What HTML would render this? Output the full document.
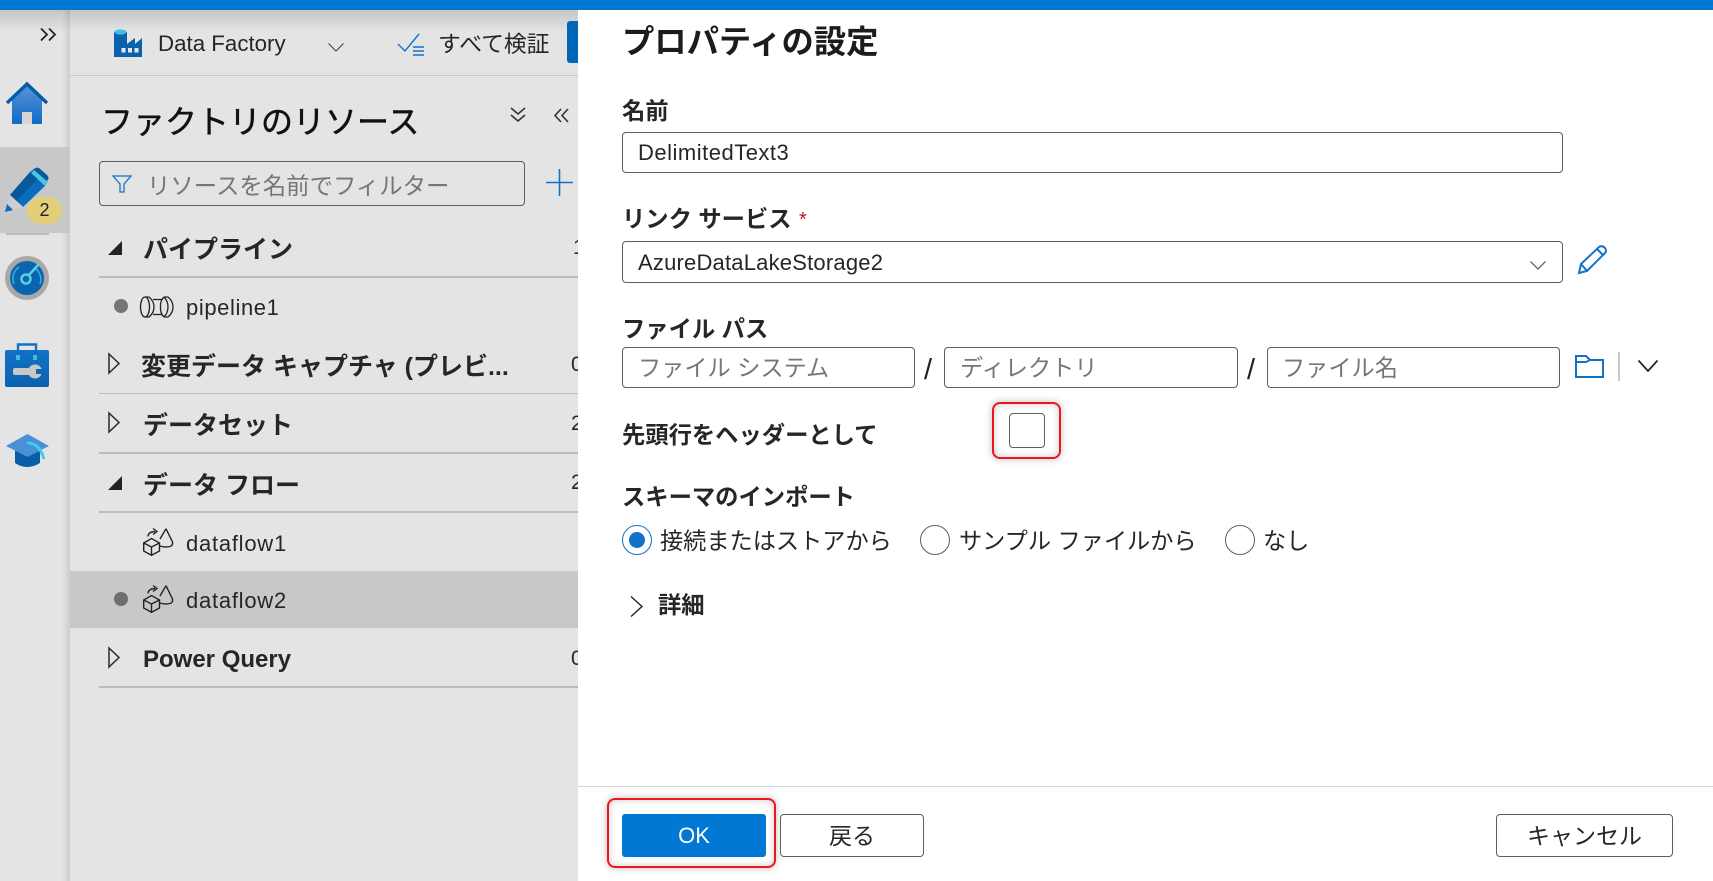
<!DOCTYPE html>
<html lang="ja"><head><meta charset="utf-8"><title>プロパティの設定</title>
<style>
html,body{margin:0;padding:0;width:1713px;height:881px;overflow:hidden;background:#e4e4e4}
body{position:relative;font-family:"Liberation Sans","Noto Sans CJK JP",sans-serif;color:#262626}
.a{position:absolute}
.t{position:absolute;white-space:nowrap;line-height:30px;height:30px}
.j{font-size:23.2px}
.b{font-weight:700}
.h{font-weight:700;font-size:25px}
.line{position:absolute;left:99px;width:479px;background:#bcbcbc}
.box{position:absolute;box-sizing:border-box;border:1px solid #605e5c;border-radius:4px;background:#fff}
.ph{color:#767676}
.radio{position:absolute;box-sizing:border-box;width:30px;height:30px;border:1px solid #605e5c;border-radius:50%;background:#fff}
.red{position:absolute;box-sizing:border-box;border:2px solid #f01420;border-radius:8px;box-shadow:0 0 8px rgba(0,0,0,.25),inset 0 0 8px rgba(0,0,0,.2);background:#fff}
svg{position:absolute;overflow:visible}
</style></head><body>

<!-- left dimmed -->
<div class="a" style="left:0;top:0;width:578px;height:881px;background:#e4e4e4"></div>
<div class="a" style="left:0;top:10px;width:578px;height:22px;background:linear-gradient(#c6c6c6,#e4e4e4)"></div>
<div class="a" style="left:62px;top:10px;width:8px;height:871px;background:linear-gradient(90deg,rgba(0,0,0,0),rgba(0,0,0,.1))"></div>
<div class="a" style="left:0;top:147px;width:70px;height:86px;background:#c8c8c8"></div>
<div class="a" style="left:6px;top:233px;width:43px;height:2px;background:#bcbcbc"></div>
<div class="a" style="left:70px;top:75px;width:508px;height:1px;background:#c8c8c8"></div>
<div class="a" style="left:70px;top:571px;width:508px;height:57px;background:#c8c8c8"></div>

<!-- top bar -->
<div class="a" style="left:0;top:0;width:1713px;height:10px;background:#0078d4;overflow:hidden">
<span class="t" style="left:1520px;top:-24px;color:#fff;font-size:22px">機能</span></div>

<!-- rail icons -->
<svg style="left:40px;top:28px" width="16" height="13" viewBox="0 0 16 13" fill="none" stroke="#222" stroke-width="1.8"><path d="M1 0.5L7 6.5L1 12.5M9 0.5L15 6.5L9 12.5"/></svg>
<svg style="left:0;top:80px" width="54" height="50" viewBox="0 0 54 50"><defs><linearGradient id="h" x1="0" y1="0" x2="0" y2="1"><stop offset="0" stop-color="#5a92d6"/><stop offset="1" stop-color="#0f6cc6"/></linearGradient></defs>
<path d="M12 19L27 5L42 19V44H12Z" fill="url(#h)"/><path d="M7 23L27 4L47 23" fill="none" stroke="#035ea8" stroke-width="3.4"/><rect x="22" y="32" width="10" height="12" fill="#d6d6d6"/></svg>
<svg style="left:4px;top:168px" width="46" height="50" viewBox="0 0 46 50"><path d="M6 27L26 4L42 17L19 39Z" fill="#0a6cc0"/><path d="M6 27L26 4L34 10.5L12.5 33Z" fill="#08589c"/><path d="M26 4L30 1Q32 -1 35 0L43 7Q46 10 43 13L41 17Z" fill="#045c9e"/><path d="M27 5L30 2L44 14L41 18Z" fill="#4fc3dc"/><path d="M6 27L19 39L1 44Z" fill="#cfcfcf"/><path d="M1 44L3 36L9 42Z" fill="#0a6cc0"/></svg>
<div class="a" style="left:27px;top:197px;width:35px;height:27px;border-radius:14px;background:#e3cf7a;text-align:center;font-size:18px;line-height:27px;color:#222">2</div>
<svg style="left:5px;top:256px" width="44" height="44" viewBox="0 0 44 44"><circle cx="22" cy="22" r="22" fill="#a8a8a8"/><circle cx="22" cy="22" r="17" fill="#0a64ae"/><path d="M9 28A14 14 0 0 1 14 11M30 12A14 14 0 0 1 35 28" fill="none" stroke="#32b4d8" stroke-width="1.5"/><circle cx="21" cy="23" r="4.5" fill="none" stroke="#5ccde6" stroke-width="2.5"/><path d="M24 19L34 8" stroke="#5ccde6" stroke-width="2.5"/></svg>
<svg style="left:5px;top:342px" width="44" height="45" viewBox="0 0 44 45"><defs><linearGradient id="k" x1="0" y1="0" x2="0" y2="1"><stop offset="0" stop-color="#1272c8"/><stop offset="1" stop-color="#0a62ae"/></linearGradient></defs><path d="M13 9V2.5H31V9" fill="none" stroke="#1272c8" stroke-width="2.4"/><rect x="0" y="8" width="44" height="37" rx="2" fill="url(#k)"/><rect x="11" y="13" width="4" height="5" fill="#46b8d8"/><rect x="28" y="13" width="4" height="5" fill="#46b8d8"/><rect x="8" y="26" width="19" height="7" rx="2" fill="#c8c8c8"/><circle cx="30" cy="29.5" r="7" fill="#c8c8c8"/><rect x="31" y="27" width="8" height="5" fill="#0a68b8"/></svg>
<svg style="left:6px;top:433px" width="44" height="36" viewBox="0 0 44 36"><path d="M9 17V30Q21 38 34 30V17Z" fill="#075ea6"/><path d="M0 13L21.5 1L43 13L21.5 24Z" fill="#4a90d8"/><path d="M21 10Q33 9 38 26" fill="none" stroke="#44cce8" stroke-width="3"/></svg>

<!-- toolbar -->
<svg style="left:114px;top:29px" width="29" height="28" viewBox="0 0 29 28"><path d="M0 3H13V15L21 9V15L28 9V28H0Z" fill="#0a62ae"/><ellipse cx="6.5" cy="3" rx="6" ry="2.6" fill="#40c0dc"/><rect x="7.5" y="19" width="4" height="4.5" fill="#e8e8e8"/><rect x="14" y="19" width="4" height="4.5" fill="#e8e8e8"/><rect x="20.5" y="19" width="4" height="4.5" fill="#e8e8e8"/></svg>
<span class="t" style="left:158px;top:29px;font-size:22.3px">Data Factory</span>
<svg style="left:328px;top:43px" width="16" height="9" viewBox="0 0 16 9" fill="none" stroke="#444" stroke-width="1.1"><path d="M.5 .5L8 8L15.5 .5"/></svg>
<svg style="left:397px;top:33px" width="28" height="24" viewBox="0 0 28 24" fill="none" stroke="#1272c8"><path d="M1 11L8 18L22 1" stroke-width="1.4"/><path d="M16 14H27M16 18H27M16 22H27" stroke-width="1.6"/></svg>
<span class="t" style="left:438px;top:29px;font-size:22.8px">すべて検証</span>
<div class="a" style="left:567px;top:21px;width:11px;height:42px;background:#0067b8;border-radius:3px 0 0 3px"></div>

<!-- resources head -->
<span class="t" style="left:101px;top:107px;font-size:32px;color:#111;-webkit-text-stroke:.5px #111">ファクトリのリソース</span>
<svg style="left:510px;top:107px" width="16" height="15" viewBox="0 0 16 15" fill="none" stroke="#333" stroke-width="1.6"><path d="M1 1L8 7L15 1M1 8L8 14L15 8"/></svg>
<svg style="left:554px;top:108px" width="15" height="15" viewBox="0 0 15 15" fill="none" stroke="#333" stroke-width="1.6"><path d="M7 1L1 7.5L7 14M14 1L8 7.5L14 14"/></svg>
<div class="a" style="left:99px;top:161px;width:426px;height:45px;box-sizing:border-box;border:1px solid #605e5c;border-radius:4px"></div>
<svg style="left:112px;top:175px" width="20" height="18" viewBox="0 0 20 18" fill="none" stroke="#1272c8" stroke-width="1.3"><path d="M1 1H19L12 9V17H8V9Z"/></svg>
<span class="t ph" style="left:147px;top:171px;font-size:23.4px">リソースを名前でフィルター</span>
<svg style="left:546px;top:169px" width="27" height="27" viewBox="0 0 27 27" stroke="#1272c8" stroke-width="1.6"><path d="M13.5 0V27M0 13.5H27"/></svg>

<!-- tree -->
<svg style="left:108px;top:241px" width="14" height="14" viewBox="0 0 14 14"><path d="M14 0V14H0Z" fill="#222"/></svg>
<span class="t h" style="left:143px;top:235px">パイプライン</span>
<span class="t" style="left:573px;top:233px;font-size:21px">1</span>
<div class="line" style="top:276px;height:2px"></div>

<div class="a" style="left:114px;top:299px;width:14px;height:14px;border-radius:50%;background:#767676"></div>
<svg style="left:140px;top:296px" width="34" height="22" viewBox="0 0 34 22" fill="none" stroke="#222" stroke-width="1.3"><ellipse cx="5" cy="11" rx="4.5" ry="10"/><path d="M5 1H9Q14 5 14 11Q14 17 9 21H5"/><path d="M13 3.5H22M13 18.5H22"/><path d="M24 1H28Q33 5 33 11Q33 17 28 21H24"/><path d="M24 1Q28 5 28 11Q28 17 24 21"/><path d="M24 1Q20 5 20.5 11Q20 17 24 21"/></svg>
<span class="t" style="left:186px;top:293px;font-size:22px;letter-spacing:.6px">pipeline1</span>

<svg style="left:108px;top:353px" width="12" height="21" viewBox="0 0 12 21" fill="none" stroke="#2a2a2a" stroke-width="1.5"><path d="M1 1L11 10.5L1 20Z"/></svg>
<span class="t h" style="left:141px;top:352px">変更データ キャプチャ (プレビ...</span>
<span class="t" style="left:571px;top:350px;font-size:21px">0</span>
<div class="line" style="top:393px;height:1px"></div>

<svg style="left:108px;top:412px" width="12" height="21" viewBox="0 0 12 21" fill="none" stroke="#2a2a2a" stroke-width="1.5"><path d="M1 1L11 10.5L1 20Z"/></svg>
<span class="t h" style="left:143px;top:411px">データセット</span>
<span class="t" style="left:571px;top:409px;font-size:21px">2</span>
<div class="line" style="top:452px;height:2px"></div>

<svg style="left:108px;top:476px" width="14" height="14" viewBox="0 0 14 14"><path d="M14 0V14H0Z" fill="#222"/></svg>
<span class="t h" style="left:143px;top:471px">データ フロー</span>
<span class="t" style="left:571px;top:468px;font-size:21px">2</span>
<div class="line" style="top:511px;height:2px"></div>

<svg style="left:143px;top:528px" width="30" height="28" viewBox="0 0 30 28" fill="none" stroke="#222" stroke-width="1.4"><path d="M0.7 15L8.5 10.5L16.5 15V23L8.5 27.3L0.7 23ZM0.7 15L8.5 19L16.5 15M8.5 19V27.3"/><path d="M5 8.5Q5 4 12 3.5M10 0.5L14 3.5L10 6.5"/><path d="M23 0.7L29.5 14Q30.5 19 23 19Q20 19 17 18M23 0.7L17 11"/></svg>
<span class="t" style="left:186px;top:529px;font-size:22px;letter-spacing:.75px">dataflow1</span>

<div class="a" style="left:114px;top:592px;width:14px;height:14px;border-radius:50%;background:#6e6e6e"></div>
<svg style="left:143px;top:585px" width="30" height="28" viewBox="0 0 30 28" fill="none" stroke="#222" stroke-width="1.4"><path d="M0.7 15L8.5 10.5L16.5 15V23L8.5 27.3L0.7 23ZM0.7 15L8.5 19L16.5 15M8.5 19V27.3"/><path d="M5 8.5Q5 4 12 3.5M10 0.5L14 3.5L10 6.5"/><path d="M23 0.7L29.5 14Q30.5 19 23 19Q20 19 17 18M23 0.7L17 11"/></svg>
<span class="t" style="left:186px;top:586px;font-size:22px;letter-spacing:.75px">dataflow2</span>

<svg style="left:108px;top:647px" width="12" height="21" viewBox="0 0 12 21" fill="none" stroke="#2a2a2a" stroke-width="1.5"><path d="M1 1L11 10.5L1 20Z"/></svg>
<span class="t" style="left:143px;top:645px;font-size:24px;font-weight:700">Power Query</span>
<span class="t" style="left:571px;top:644px;font-size:21px">0</span>
<div class="line" style="top:686px;height:2px"></div>

<!-- right panel -->
<div class="a" style="left:578px;top:10px;width:1135px;height:871px;background:#fff"></div>
<span class="t b" style="left:622px;top:27px;font-size:32.3px;color:#1c1c1c">プロパティの設定</span>

<span class="t b" style="left:622px;top:96px;font-size:23.3px">名前</span>
<div class="box" style="left:622px;top:132px;width:941px;height:41px"></div>
<span class="t" style="left:638px;top:138px;font-size:22px;letter-spacing:.5px">DelimitedText3</span>

<span class="t b" style="left:622px;top:204px;font-size:23.3px">リンク サービス</span>
<span class="t" style="left:799px;top:205px;font-size:20px;color:#c8102e">*</span>
<div class="box" style="left:622px;top:241px;width:941px;height:42px"></div>
<span class="t" style="left:638px;top:248px;font-size:22px;letter-spacing:.2px">AzureDataLakeStorage2</span>
<svg style="left:1530px;top:261px" width="16" height="9" viewBox="0 0 16 9" fill="none" stroke="#555" stroke-width="1.2"><path d="M.5 .5L8 8L15.5 .5"/></svg>
<svg style="left:1578px;top:245px" width="29" height="29" viewBox="0 0 29 29" fill="none" stroke="#1272c8" stroke-width="2"><path d="M1 28L3 19L21 2Q24 -0 27 3Q29 6 27 8L9 26ZM3 19L9 26M19 4L25 10"/></svg>

<span class="t b" style="left:622px;top:314px;font-size:23.3px">ファイル パス</span>
<div class="box" style="left:622px;top:347px;width:293px;height:41px"></div>
<span class="t j ph" style="left:638px;top:353px">ファイル システム</span>
<span class="t" style="left:924px;top:355px;font-size:29px;color:#222">/</span>
<div class="box" style="left:944px;top:347px;width:294px;height:41px"></div>
<span class="t j ph" style="left:960px;top:353px">ディレクトリ</span>
<span class="t" style="left:1247px;top:355px;font-size:29px;color:#222">/</span>
<div class="box" style="left:1267px;top:347px;width:293px;height:41px"></div>
<span class="t j ph" style="left:1282px;top:353px">ファイル名</span>
<svg style="left:1575px;top:354px" width="29" height="24" viewBox="0 0 29 24" fill="none" stroke="#1272c8" stroke-width="2"><path d="M1 2H11L15 6H28V23H1ZM1 8H11L15 6"/></svg>
<div class="a" style="left:1618px;top:352px;width:2px;height:29px;background:#c8c8c8"></div>
<svg style="left:1638px;top:360px" width="20" height="12" viewBox="0 0 20 12" fill="none" stroke="#222" stroke-width="1.7"><path d="M.5 .5L10 11L19.5 .5"/></svg>

<span class="t b" style="left:622px;top:420px;font-size:23.3px">先頭行をヘッダーとして</span>
<div class="red" style="left:992px;top:402px;width:69px;height:57px"></div>
<div class="box" style="left:1009px;top:413px;width:36px;height:35px"></div>

<span class="t b" style="left:622px;top:482px;font-size:23.3px">スキーマのインポート</span>
<div class="radio" style="left:622px;top:525px;border-color:#1272c8"></div>
<div class="a" style="left:629px;top:532px;width:16px;height:16px;border-radius:50%;background:#1272c8"></div>
<span class="t j" style="left:660px;top:526px">接続またはストアから</span>
<div class="radio" style="left:920px;top:525px"></div>
<span class="t j" style="left:959px;top:526px">サンプル ファイルから</span>
<div class="radio" style="left:1225px;top:525px"></div>
<span class="t j" style="left:1263px;top:526px">なし</span>

<svg style="left:630px;top:596px" width="13" height="21" viewBox="0 0 13 21" fill="none" stroke="#222" stroke-width="1.4"><path d="M1 .5L12 10.5L1 20.5"/></svg>
<span class="t b" style="left:658px;top:590px;font-size:23.3px">詳細</span>

<!-- footer -->
<div class="a" style="left:578px;top:786px;width:1135px;height:1px;background:#d6d6d6"></div>
<div class="red" style="left:607px;top:798px;width:169px;height:70px"></div>
<div class="a" style="left:622px;top:814px;width:144px;height:43px;background:#0078d4;border-radius:3px;color:#fff;text-align:center;line-height:43px;font-size:22px">OK</div>
<div class="box" style="left:780px;top:814px;width:144px;height:43px;text-align:center;line-height:43px;font-size:23px">戻る</div>
<div class="box" style="left:1496px;top:814px;width:177px;height:43px;text-align:center;line-height:43px;font-size:23px">キャンセル</div>
</body></html>
